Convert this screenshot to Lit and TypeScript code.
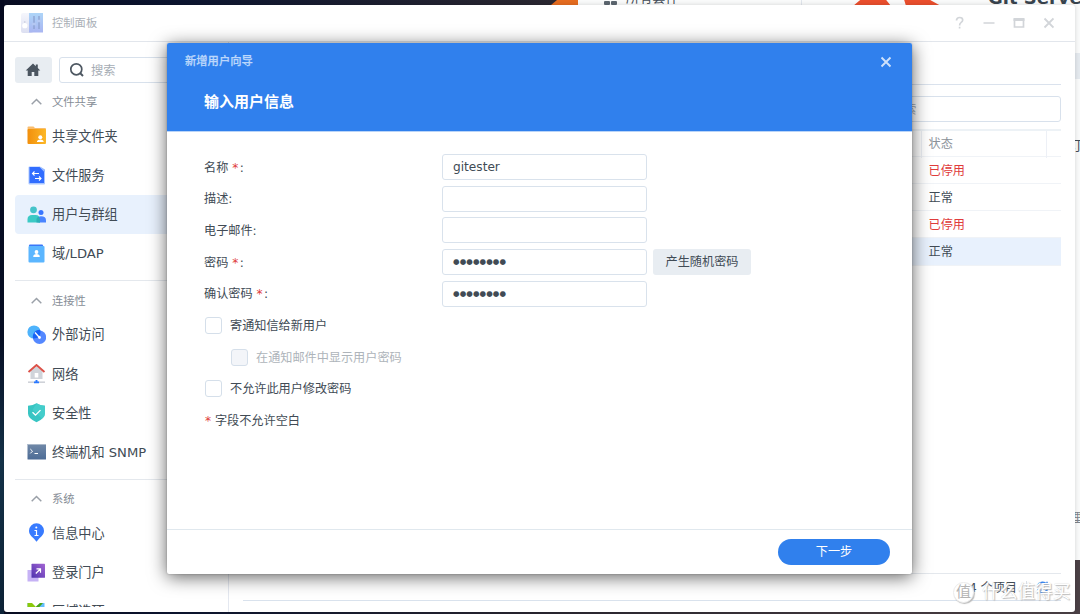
import { LitElement, html, css, svg } from "lit";
import { customElement, property } from "lit/decorators.js";

const icons: Record<string, unknown> = {
  folder: svg`<defs><linearGradient id="g" x1="0" x2="1"><stop offset="0" stop-color="#f28f0c"/><stop offset="1" stop-color="#fcb827"/></linearGradient></defs>
    <path d="M.5 1.500q0-1 1-1h5l1.500 1.500h10q1 0 1 1v4h-18z" fill="#f9bd6e"/><rect x=".5" y="3" width="18.500" height="15" rx="1" fill="url(#g)"/>
    <circle cx="13.300" cy="11.300" r="2" fill="#fff"/><path d="M10 16v-.8q.5-1.700 3.300-1.700t3.300 1.700v.8z" fill="#fff"/>`,
  file: svg`<path d="M1.500 2v-.5q0-1 1-1h10.500l5 3v14q0 1-1 1H2.500q-1 0-1-1z" fill="#a9c6ff"/><path d="M2.500 1h10l4.500 4.500V17H2.500z" fill="#316dff"/>
    <path d="M12.500.500l5.500 3.500v1.500h-1z" fill="#94b7ff"/><path d="M12 7.500H5.500M7.500 5.500l-2 2 2 2M8 12.500h6M12 10.500l2 2-2 2" fill="none" stroke="#fff" stroke-width="1.100"/>`,
  users: svg`<circle cx="6.500" cy="4.800" r="3.400" fill="#45c3ca"/><path d="M.5 17.500v-3q0-4.500 4.500-4.500h3.500q4.500 0 4.500 4.500v3z" fill="#3bcac5"/>
    <circle cx="14" cy="7.500" r="2.500" fill="#3876ff"/><path d="M11.500 17.500v-5q.5-1.200 2.500-1.200 5 0 5 4v2.200z" fill="#4984ff"/><path d="M9.500 17.500v-3q0-2 2-2.800 1.500 1 1.500 2.800v3z" fill="#2bb0b5"/>`,
  domain: svg`<rect x="2" y=".5" width="14" height="4" rx="1" fill="#3977f8"/><rect x="1.500" y="2" width="16" height="16.500" rx="1" fill="#5bb6ff"/>
    <circle cx="9.500" cy="8" r="1.900" fill="#fff"/><path d="M6.300 13v-1.200q.7-1.800 3.200-1.800t3.200 1.800V13z" fill="#fff"/>`,
  external: svg`<circle cx="7" cy="7" r="6.600" fill="#4eb3fc"/><circle cx="12.500" cy="12.300" r="6.700" fill="#5488ff"/><path d="M13.200 4.900a6.600 6.600 0 0 1-7.100 8.600 6.700 6.700 0 0 1 7.100-8.600z" fill="#1762f5"/>
    <path d="M8 7.500l4 4.500" stroke="#fff" stroke-width="1.300"/><circle cx="12.500" cy="12.500" r="1.400" fill="#fff"/>`,
  network: svg`<path d="M3.500 7L9.500 2.500l6 4.500v8h-12z" fill="#d0d4da"/><path d="M1.500 8L9.500 1l8 7" stroke="#dc5148" stroke-width="1.900" fill="none"/>
    <rect x="7.700" y="9" width="3.600" height="4.500" rx=".5" fill="#fff"/><path d="M1 18.200h17" stroke="#cfd2d8" stroke-width="1.600"/><path d="M9.500 16v2M7 18.400h5" stroke="#2978ff" stroke-width="1.900"/>`,
  shield: svg`<path d="M9.500.2q3.500 2.300 8.500 2.500v7.800q0 5-8.500 8.700Q1 15.500 1 10.500V2.700Q6 2.500 9.500.2z" fill="#38c5c3"/><path d="M9.500.2q3.500 2.300 8.500 2.500v7.800q0 3-3 5L5.500 7z" fill="#4ad0cf" opacity=".7"/><path d="M5.500 9.300l3 2.800 5-5" fill="none" stroke="#fff" stroke-width="1.300"/>`,
  terminal: svg`<defs><linearGradient id="g" x2="0" y2="1"><stop offset="0" stop-color="#7189a8"/><stop offset="1" stop-color="#4d6c96"/></linearGradient></defs><rect x=".5" y="2" width="18.500" height="15.500" rx=".6" fill="url(#g)"/><path d="M.5 2.500h18.500" stroke="#a9b8ca"/><path d="M3.300 7l2.200 2.200-2.200 2.200M7.500 11.500H11" fill="none" stroke="#fff"/>`,
  info: svg`<path d="M9.500.3A7.500 7.500 0 0 1 17 7.800c0 4-3.200 6.200-5 7.900l-2.500 3-2.500-3C5.200 14 2 11.800 2 7.800A7.500 7.500 0 0 1 9.500.3z" fill="#387bff"/><circle cx="9.300" cy="4.500" r="1" fill="#fff"/><path d="M7.500 7.500h2v5M7.500 12.500h4" fill="none" stroke="#fff" stroke-width="1.200"/>`,
  portal: svg`<defs><linearGradient id="g" x1="1" x2="0" y2="1"><stop offset="0" stop-color="#a465d3"/><stop offset="1" stop-color="#4d32ae"/></linearGradient></defs><rect x=".5" y="7" width="11" height="11.500" fill="#c6b2f5"/><rect x="4.500" y=".8" width="13.500" height="14" rx=".6" fill="url(#g)"/><path d="M8.800 10.500l4.500-4.500M9.500 5.800h4v4" fill="none" stroke="#fff" stroke-width="1.200"/>`,
  region: svg`<rect x=".5" y="1" width="17" height="17" fill="#62bdff"/><path d="M.5 1h7l6 8v9H.500z" fill="#8ac90a"/><path d="M5 1h8l-4 4z" fill="#fff"/><path d="M9 4.500l4-3.500h3L11 6.500z" fill="#4ba514"/>`,
};

@customElement("nav-item")
class NavItem extends LitElement {
  @property() icon = "";
  @property() label = "";
  @property({ type: Boolean, reflect: true }) active = false;
  static styles = css`
    :host { display: flex; align-items: center; gap: 6px; height: 39.2px; padding-left: 11.500px; box-sizing: border-box; border-radius: 4px; font-size: 13.150px; color: #414b55; white-space: nowrap; }
    :host([active]) { background: #e8f1fd; }
    svg { width: 19.500px; height: 19.500px; flex: none; }
    span { line-height: 20px; padding-top: 1.400px; }
  `;
  render() {
    return html`<svg viewBox="0 0 19.5 19.5">${icons[this.icon]}</svg><span>${this.label}</span>`;
  }
}

const groups = [
  { title: "文件共享", items: [["folder", "共享文件夹"], ["file", "文件服务"], ["users", "用户与群组"], ["domain", "域/LDAP"]] },
  { title: "连接性", items: [["external", "外部访问"], ["network", "网络"], ["shield", "安全性"], ["terminal", "终端机和 SNMP"]] },
  { title: "系统", items: [["info", "信息中心"], ["portal", "登录门户"], ["region", "区域选项"]] },
];

const fields = [
  { label: "名称", required: true, value: "gitester" },
  { label: "描述", required: false, value: "" },
  { label: "电子邮件", required: false, value: "" },
  { label: "密码", required: true, value: "●●●●●●●●", random: true },
  { label: "确认密码", required: true, value: "●●●●●●●●" },
];

const statuses = ["已停用", "正常", "已停用", "正常"];

@customElement("app-root")
class AppRoot extends LitElement {
  static styles = css`
    :host { display: block; position: relative; width: 1080px; height: 614px; overflow: hidden; font-family: "DejaVu Sans", "Noto Sans CJK SC", sans-serif; font-size: 12.150px; line-height: 18px; color: #414b55;
      background: linear-gradient(90deg, #090d23 0, #0c1530 180px, #26242f 500px, #453b40 900px, #4b4146 100%); }
    * { box-sizing: border-box; }
    .edge { position: absolute; left: 0; top: 0; width: 4px; height: 614px; background: linear-gradient(#060a20, #081026 55%, #15334a 75%, #0d2338); }
    .flare { position: absolute; left: 551px; top: 0; width: 27px; height: 5px; background: #e56c20; clip-path: polygon(6px 0, 100% 0, 100% 100%, 0 100%); }

    .packages { position: absolute; left: 578px; top: -18px; width: 520px; height: 578px; background: #f9fafa; overflow: hidden; }
    .packages > * { position: absolute; white-space: nowrap; }
    .all { left: 48px; top: 7px; font-size: 13.200px; }
    .squares { left: 26px; top: 19px; width: 13px; height: 4px; display: flex; gap: 1.500px; }
    .squares i { flex: 1; background: #5c6770; border-radius: 1px; }
    .vline { left: 223px; top: 0; width: 1px; height: 30px; background: #e0e5ec; }
    .logo { left: 275px; top: 10px; width: 92px; height: 14px; }
    .git { left: 410px; top: 4px; font: bold 18px/24px "DejaVu Sans", sans-serif; color: #39444e; }
    .graybar { left: 497px; top: 71px; width: 10px; height: 26px; background: #e4e9ee; }
    .cut1 { left: 491px; top: 155px; font-size: 13px; }
    .cut2 { left: 491px; top: 527px; font-size: 13px; color: #7d838a; }

    .window { position: absolute; left: 4px; top: 4.500px; width: 1071px; height: 607.500px; background: #fff; border-radius: 3px; display: flex; flex-direction: column; overflow: hidden; box-shadow: 0 0 4px rgba(0, 0, 0, .16); }
    .titlebar { height: 37.500px; flex: none; border-bottom: 1px solid #e2e6ec; display: flex; align-items: center; padding: 0 20px 0 17px; color: #aab0b7; font-size: 11.300px; }
    .titlebar .name { margin-left: 8px; flex: 1; padding-top: 2px; }
    .titlebar .controls { width: 100px; height: 16px; margin-right: 1px; }
    .content { flex: 1; min-height: 0; display: flex; }

    .side { width: 224px; padding: 15px 0 5px 11px; display: flex; flex-direction: column; }
    .tools { display: flex; gap: 8px; height: 26px; flex: none; }
    .home { width: 37px; background: #e8edf2; border-radius: 3px; display: flex; align-items: center; padding-left: 10px; }
    .home svg { width: 16px; height: 16px; }
    .find { width: 160px; margin-left: -1px; border: 1px solid #d8e1ec; border-radius: 3px; display: flex; align-items: center; gap: 6px; padding-left: 9px; color: #a6adb5; font-size: 12.300px; }
    .find svg { width: 16px; height: 16px; }
    .find span { padding-top: 1px; }
    .nav { flex: 1; min-height: 0; overflow: hidden; padding-top: 4.500px; }
    .group + .group { margin-top: 6.800px; border-top: 1px solid #e4e8ed; padding-top: 5px; }
    .group h3 { margin: 0; height: 29px; display: flex; align-items: center; gap: 10px; padding-left: 16px; font-weight: 400; font-size: 11.300px; color: #868d96; }
    .group h3 svg { width: 11px; height: 8px; }
    .group h3 span { padding-top: 2px; }

    .main { flex: 1; border-left: 1px solid #e4e8f0; padding: 0 14px 11px; display: flex; flex-direction: column; }
    .tabs { height: 43px; flex: none; border-bottom: 1px solid #dae2ed; }
    .filter { align-self: flex-end; width: 192px; height: 26px; margin: 11px 0 7px; border: 1px solid #d8e1ec; border-radius: 3px; padding: 4px 0 0 22px; color: #a6adb5; flex: none; }
    .row { display: grid; grid-template-columns: 1fr 125px 15px; height: 27px; line-height: 28px; flex: none; border-bottom: 1px solid #f0f3f7; }
    .row.head { height: 28px; border-top: 2px solid #edf2f6; line-height: 27px; color: #8b929a; }
    .row span { padding-left: 6.500px; border-left: 1px solid transparent; }
    .row.head span, .row.head b { border-left: 1px solid #edf0f6; }
    .row.head b:first-child { border-left: 0; }
    .row.off span { color: #e03c3c; }
    .row.sel { height: 28px; background: #e8f1fd; }
    .space { flex: 1; }
    .pager { height: 28px; border-top: 1px solid #e4e8ed; border-bottom: 1px solid #d9e2ed; display: flex; align-items: center; justify-content: flex-end; gap: 9px; padding-right: 12px; }
    .pager span { padding-top: 1px; }
    .pager i { width: 1px; height: 12px; background: #d9dfe6; }
    .pager svg { width: 13px; height: 13px; }

    .dialog { position: absolute; left: 167px; top: 43px; width: 745px; height: 531px; background: #fff; border-radius: 2px; box-shadow: 0 3px 18px rgba(0, 0, 0, .62), 0 0 2px rgba(0, 0, 0, .28); display: flex; flex-direction: column; overflow: hidden; }
    .banner { height: 89px; flex: none; background: #3080ed; border-bottom: 1px solid #b9d4f8; color: #fff; padding: 10px 20px 0 18px; }
    .banner .top { display: flex; justify-content: space-between; align-items: center; font-size: 11.300px; font-weight: 500; color: #bcd7fb; -webkit-text-stroke: .25px #bcd7fb; }
    .banner .top svg { width: 12px; height: 12px; }
    .banner h1 { margin: 19px 0 0 19px; font-size: 15px; line-height: 24px; font-weight: 700; }
    .form { flex: 1; padding: 22px 37px 0; display: flex; flex-direction: column; gap: 5.700px; }
    .field { display: flex; align-items: center; height: 26px; }
    .field label { width: 238px; padding-top: 1px; }
    .field em, .note em { font-style: normal; color: #e03c3c; }
    .field em { margin-right: 1.500px; }
    .input { width: 205px; height: 26px; border: 1px solid #d9e2ec; border-radius: 3px; padding: 3px 10px; }
    .dots { font-size: 7.500px; letter-spacing: .1px; }
    .random { margin-left: 6px; width: 98px; height: 26px; line-height: 27px; text-align: center; border-radius: 3px; background: #e8edf2; }
    .check { display: flex; align-items: center; height: 26px; gap: 8px; padding-left: 1px; }
    .check i { width: 17px; height: 17px; border: 1px solid #d5dfea; border-radius: 3px; }
    .check span { padding-top: 1px; }
    .check.sub { padding-left: 27px; color: #aeb4ba; }
    .check.sub i { background: #f3f5f9; }
    .note { height: 26px; line-height: 27px; padding-left: 1px; }
    .footer { height: 45px; flex: none; border-top: 1px solid #e0e8ee; display: flex; align-items: center; justify-content: flex-end; padding-right: 22px; }
    .next { width: 112px; height: 26px; line-height: 27px; border-radius: 13px; background: #3080ed; color: #fff; text-align: center; }

    .mark { position: absolute; left: 953px; top: 580px; display: flex; align-items: center; gap: 8px; color: #fff; font-size: 17.700px; line-height: 24px; white-space: nowrap; text-shadow: 1px 1px 1px #bbb, 0 0 1px #ccc; }
    .mark b { width: 21px; height: 21px; border-radius: 50%; background: #fff; border: 1px solid #ececec; box-shadow: 1px 1px 1px #bbb; font-weight: 400; font-size: 15px; line-height: 18px; text-align: center; color: #b4b4b4; text-shadow: none; }
  `;

  renderSidebar() {
    return html`<aside class="side">
      <div class="tools">
        <div class="home"><svg viewBox="0 0 16 16"><path d="M8 1.500L.700 8.500h2V14h4v-4h2.600v4h4V8.500h2L12.800 6V2.500h-2V4.200z" fill="#4b5560"/></svg></div>
        <div class="find"><svg viewBox="0 0 16 16" fill="none" stroke="#4d5761"><circle cx="7.300" cy="7.300" r="5.500" stroke-width="1.700"/><path d="M11 11l3 3" stroke-width="2"/></svg><span>搜索</span></div>
      </div>
      <nav class="nav">
        ${groups.map((g) => html`<section class="group">
          <h3><svg viewBox="0 0 11 8"><path d="M.7 6.200L5.500 1.500l4.800 4.700" fill="none" stroke="#9aa0a8" stroke-width="1.500"/></svg><span>${g.title}</span></h3>
          ${g.items.map(([icon, label]) => html`<nav-item .icon=${icon} .label=${label} ?active=${icon === "users"}></nav-item>`)}
        </section>`)}
      </nav>
    </aside>`;
  }

  renderDialog() {
    return html`<div class="dialog">
      <header class="banner">
        <div class="top"><span>新增用户向导</span><svg viewBox="0 0 12 12"><path d="M1.500 1.500l9 9M10.500 1.500l-9 9" stroke="#cfe1fb" stroke-width="1.900"/></svg></div>
        <h1>输入用户信息</h1>
      </header>
      <div class="form">
        ${fields.map((f) => html`<div class="field">
          <label>${f.label}${f.required ? html` <em>*</em>` : ""}:</label>
          <div class="input ${f.value.startsWith("●") ? "dots" : ""}">${f.value}</div>
          ${f.random ? html`<div class="random">产生随机密码</div>` : ""}
        </div>`)}
        <div class="check"><i></i><span>寄通知信给新用户</span></div>
        <div class="check sub"><i></i><span>在通知邮件中显示用户密码</span></div>
        <div class="check"><i></i><span>不允许此用户修改密码</span></div>
        <div class="note"><em>*</em> 字段不允许空白</div>
      </div>
      <footer class="footer"><div class="next">下一步</div></footer>
    </div>`;
  }

  render() {
    return html`
      <div class="edge"></div><div class="flare"></div>
      <div class="packages">
        <div class="squares"><i></i><i></i></div><div class="all">所有套件</div><div class="vline"></div>
        <svg class="logo" viewBox="0 0 92 14"><path d="M0 14L12 4h18l8 10zM53 14L50 4h20l18 10z" fill="#ea4f2d"/></svg>
        <div class="git">Git Server</div><div class="graybar"></div><div class="cut1">订</div><div class="cut2">理</div>
      </div>
      <div class="window">
        <header class="titlebar">
          <svg width="23" height="22" viewBox="0 0 23 22"><defs><linearGradient id="p" x2="0" y2="1"><stop offset="0" stop-color="#aed5f8"/><stop offset="1" stop-color="#a9b5f1"/></linearGradient><linearGradient id="q" x2="0" y2="1"><stop offset="0" stop-color="#f5f6fc"/><stop offset="1" stop-color="#dcdff1"/></linearGradient></defs>
            <rect x="0" y="1" width="12" height="20" rx="2" fill="url(#q)"/><path d="M8 1h14v19.500H8z" fill="url(#p)"/><circle cx="3.800" cy="13.700" r="2.600" fill="#fff"/><path d="M3.800 9v2" stroke="#c9cede"/><path d="M13 4v13M18 4v13" stroke="#899dcc" stroke-width="1.200"/><path d="M11 12h4M16 9h4" stroke="#b4c7f2" stroke-width="2.500"/></svg>
          <span class="name">控制面板</span>
          <svg class="controls" viewBox="0 0 100 16" fill="none" stroke="#d2d5d9" stroke-width="1.700"><path d="M2.500 5.500q0-3 3.200-3 3 0 3 2.600 0 1.600-1.700 2.500Q5.600 8.500 5.600 10.500M5.600 11.800v1.800"/><path d="M29.500 8h11"/><path d="M60.500 4.500h9v7.500h-9z"/><path d="M59.500 4.500h11" stroke-width="3"/><path d="M90.500 3.500l9 9M99.500 3.500l-9 9" stroke-width="1.900"/></svg>
        </header>
        <div class="content">
          ${this.renderSidebar()}
          <main class="main">
            <div class="tabs"></div>
            <div class="filter">搜索</div>
            <div class="row head"><b></b><span>状态</span><b></b></div>
            ${statuses.map((s, i) => html`<div class="row ${s === "已停用" ? "off" : ""} ${i === 3 ? "sel" : ""}"><b></b><span>${s}</span><b></b></div>`)}
            <div class="space"></div>
            <div class="pager"><span>4 个项目</span><i></i><svg viewBox="0 0 13 13" fill="none" stroke="#2f80ed" stroke-width="1.500"><path d="M1.500 5.500a5 5 0 0 1 9-2M11.500 7.500a5 5 0 0 1-9 2"/><path d="M11 .8v3.200H7.500M2 12.200V9h3.500"/></svg></div>
          </main>
        </div>
      </div>
      ${this.renderDialog()}
      <div class="mark"><b>值</b>什么值得买</div>
    `;
  }
}
